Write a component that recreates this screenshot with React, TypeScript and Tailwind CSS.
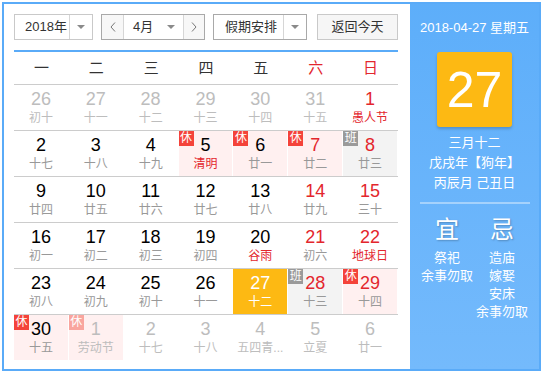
import React from "react";

type Cell = {
  d: number;
  l: string;
  other?: boolean;
  red?: boolean;
  lred?: boolean;
  bg?: "rest" | "work" | "today";
  badge?: "休" | "班";
  faded?: boolean;
};

const rows: Cell[][] = [
  [
    { d: 26, l: "初十", other: true },
    { d: 27, l: "十一", other: true },
    { d: 28, l: "十二", other: true },
    { d: 29, l: "十三", other: true },
    { d: 30, l: "十四", other: true },
    { d: 31, l: "十五", other: true },
    { d: 1, l: "愚人节", red: true, lred: true },
  ],
  [
    { d: 2, l: "十七" },
    { d: 3, l: "十八" },
    { d: 4, l: "十九" },
    { d: 5, l: "清明", lred: true, bg: "rest", badge: "休" },
    { d: 6, l: "廿一", bg: "rest", badge: "休" },
    { d: 7, l: "廿二", red: true, bg: "rest", badge: "休" },
    { d: 8, l: "廿三", red: true, bg: "work", badge: "班" },
  ],
  [
    { d: 9, l: "廿四" },
    { d: 10, l: "廿五" },
    { d: 11, l: "廿六" },
    { d: 12, l: "廿七" },
    { d: 13, l: "廿八" },
    { d: 14, l: "廿九", red: true },
    { d: 15, l: "三十", red: true },
  ],
  [
    { d: 16, l: "初一" },
    { d: 17, l: "初二" },
    { d: 18, l: "初三" },
    { d: 19, l: "初四" },
    { d: 20, l: "谷雨", lred: true },
    { d: 21, l: "初六", red: true },
    { d: 22, l: "地球日", red: true, lred: true },
  ],
  [
    { d: 23, l: "初八" },
    { d: 24, l: "初九" },
    { d: 25, l: "初十" },
    { d: 26, l: "十一" },
    { d: 27, l: "十二", bg: "today" },
    { d: 28, l: "十三", red: true, bg: "work", badge: "班" },
    { d: 29, l: "十四", red: true, bg: "rest", badge: "休" },
  ],
  [
    { d: 30, l: "十五", bg: "rest", badge: "休" },
    { d: 1, l: "劳动节", other: true, bg: "rest", badge: "休", faded: true },
    { d: 2, l: "十七", other: true },
    { d: 3, l: "十八", other: true },
    { d: 4, l: "五四青...", other: true },
    { d: 5, l: "立夏", other: true },
    { d: 6, l: "廿一", other: true },
  ],
];

function Tri() {
  return (
    <svg width="8" height="4" viewBox="0 0 8 4">
      <path d="M0 0h8L4 4z" fill="#8a8a8a" />
    </svg>
  );
}

function Chev({ right }: { right?: boolean }) {
  return (
    <svg width="6" height="10" viewBox="0 0 6 10">
      <path
        d={right ? "M1 0.5L5 5 1 9.5" : "M5 0.5L1 5l4 4.5"}
        stroke="#777"
        strokeWidth="1"
        fill="none"
      />
    </svg>
  );
}

function DayCell({ c }: { c: Cell }) {
  let bg = "bg-white";
  if (c.bg === "rest") bg = "bg-[#fff0f0]";
  if (c.bg === "work") bg = "bg-[#f3f3f3]";
  if (c.bg === "today") bg = "bg-[#fdb913]";

  let numColor = "text-black";
  if (c.red) numColor = "text-[#e3262d]";
  if (c.other) numColor = "text-[#bdbdbd]";
  if (c.bg === "today") numColor = "text-white";

  let lColor = "text-[#999]";
  if (c.lred) lColor = "text-[#e3262d]";
  if (c.other) lColor = "text-[#bdbdbd]";
  if (c.bg === "today") lColor = "text-white";

  let badgeBg = "bg-[#f4433a]";
  if (c.badge === "班") badgeBg = "bg-[#9a9a9a]";
  if (c.faded) badgeBg = "bg-[#f9a59e]";

  return (
    <div className={`relative h-[45px] border-r border-white flex flex-col items-center pt-[4px] ${bg}`}>
      {c.badge && (
        <span
          className={`absolute top-0 left-0 w-[15px] h-[15px] text-white text-[12px] leading-[15px] text-center ${badgeBg}`}
        >
          {c.badge}
        </span>
      )}
      <div className={`text-[18px] leading-[20px] ${numColor}`}>{c.d}</div>
      <div className={`mt-[1px] text-[12px] leading-[16px] whitespace-nowrap ${lColor}`}>{c.l}</div>
    </div>
  );
}

export default function App() {
  const weekdays = ["一", "二", "三", "四", "五", "六", "日"];
  return (
    <div className="w-[543px] h-[374px] bg-white pt-[2px] pl-[2px] font-['Liberation_Sans','Noto_Sans_CJK_SC',sans-serif]">
      <div className="w-[539px] h-[369px] border-2 border-[#5aabf8] flex">
        {/* Left: calendar */}
        <div className="w-[406px] pl-[10px] pr-[12px] pt-[10px] bg-white">
          <div className="h-[26px] flex text-[13px] text-[#333]">
            <div className="w-[79px] h-[26px] border border-[#c9c9c9] flex">
              <div className="w-[55px] pl-[10px] flex items-center border-r border-[#d6d6d6]">2018年</div>
              <div className="flex-1 flex items-center justify-center">
                <Tri />
              </div>
            </div>
            <div className="ml-[8px] w-[104px] h-[26px] border border-[#a9a9a9] flex">
              <div className="w-[22px] flex items-center justify-center border-r border-[#d6d6d6] bg-[#f7f7f7]">
                <Chev />
              </div>
              <div className="w-[60px] pl-[9px] pr-[8px] flex items-center justify-between border-r border-[#d6d6d6]">
                <span>4月</span>
                <Tri />
              </div>
              <div className="flex-1 flex items-center justify-center bg-[#f7f7f7]">
                <Chev right />
              </div>
            </div>
            <div className="ml-[8px] w-[94px] h-[26px] border border-[#a9a9a9] flex">
              <div className="w-[70px] pl-[11px] flex items-center border-r border-[#d6d6d6]">假期安排</div>
              <div className="flex-1 flex items-center justify-center">
                <Tri />
              </div>
            </div>
            <div className="ml-[10px] w-[81px] h-[26px] border border-[#c9c9c9] bg-[#f6f6f6] flex items-center justify-center">
              返回今天
            </div>
          </div>
          <div className="mt-[10px] h-[2px] bg-[#5aabf8]" />
          <div className="grid grid-cols-7 h-[33px] border-b border-[#cccccc] items-center text-center text-[15px]">
            {weekdays.map((w, i) => (
              <div key={w} className={i >= 5 ? "text-[#e3262d]" : "text-[#333]"}>
                {w}
              </div>
            ))}
          </div>
          {rows.map((r, ri) => (
            <div
              key={ri}
              className={ri < rows.length - 1 ? "grid grid-cols-7 border-b border-[#cccccc]" : "grid grid-cols-7"}
            >
              {r.map((c, ci) => (
                <DayCell key={ci} c={c} />
              ))}
            </div>
          ))}
        </div>
        {/* Right panel */}
        <div className="flex-1 bg-linear-to-b from-[#5daefa] to-[#74bafc] flex flex-col items-center text-white pt-[15px]">
          <div className="text-[13px] leading-[18px] whitespace-nowrap">2018-04-27 星期五</div>
          <div className="mt-[15px] w-[75px] h-[75px] rounded-[3px] bg-[#fdb913] shadow-[0_2px_3px_rgba(0,0,0,0.18)] flex items-center justify-center text-[50px] leading-none">
            27
          </div>
          <div className="mt-[6px] text-[13px] leading-[20px] text-center">
            <div>三月十二</div>
            <div>戊戌年【狗年】</div>
            <div>丙辰月 己丑日</div>
          </div>
          <div className="mt-[9px] w-[110px] h-[2px] bg-white/40" />
          <div className="w-[110px] grid grid-cols-2 mt-[12px]">
            <div className="flex flex-col items-center">
              <div className="text-[24px] leading-[28px] [text-shadow:1px_1px_2px_rgba(0,0,0,0.25)]">宜</div>
              <div className="mt-[5px] text-[13px] leading-[18px] text-center whitespace-nowrap">
                <div>祭祀</div>
                <div>余事勿取</div>
              </div>
            </div>
            <div className="flex flex-col items-center">
              <div className="text-[24px] leading-[28px] [text-shadow:1px_1px_2px_rgba(0,0,0,0.25)]">忌</div>
              <div className="mt-[5px] text-[13px] leading-[18px] text-center whitespace-nowrap">
                <div>造庙</div>
                <div>嫁娶</div>
                <div>安床</div>
                <div>余事勿取</div>
              </div>
            </div>
          </div>
        </div>
      </div>
    </div>
  );
}
